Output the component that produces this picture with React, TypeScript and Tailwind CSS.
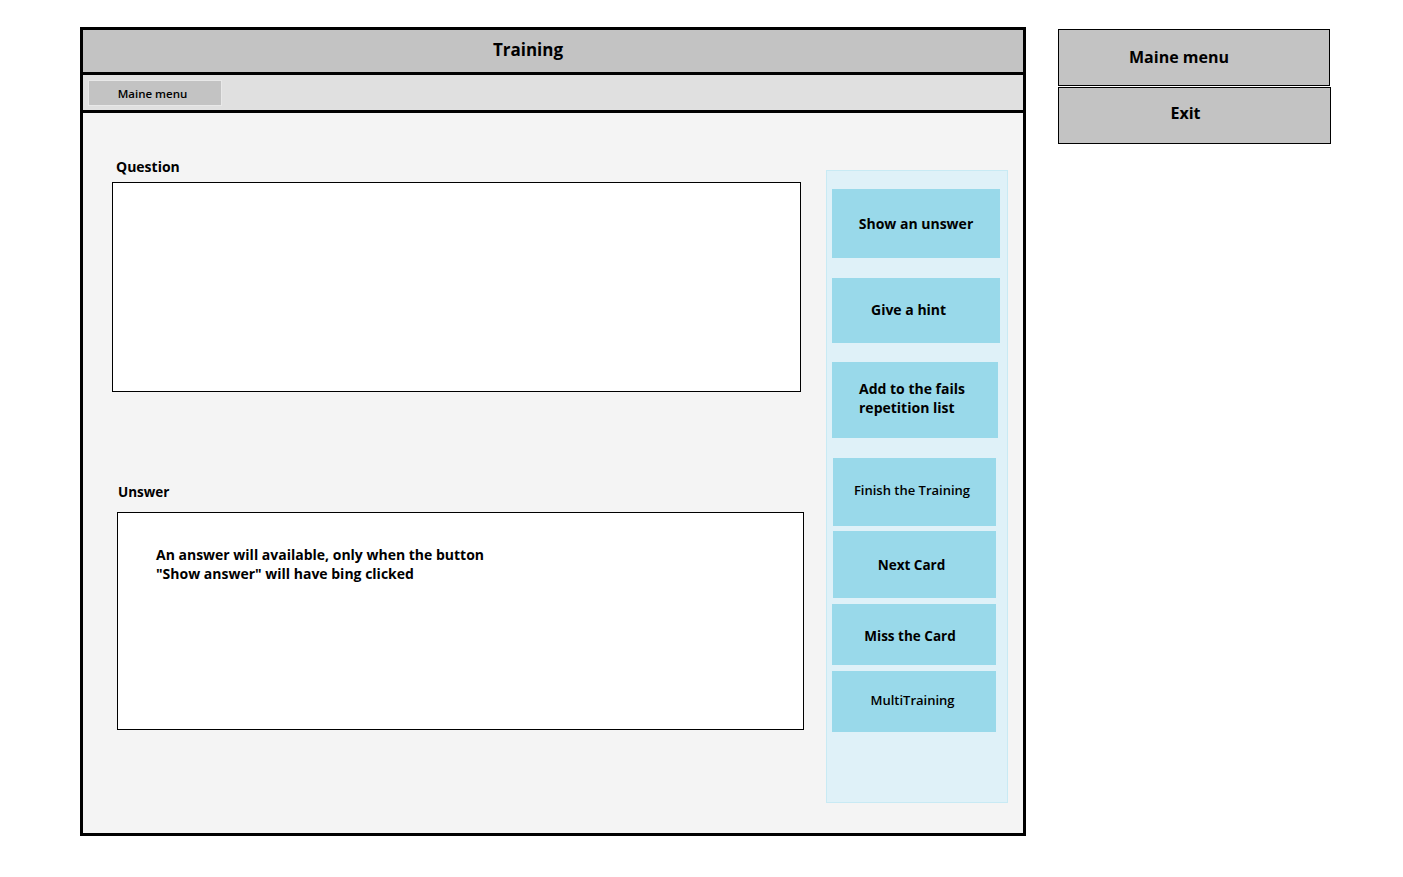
import React from "react";

const font = { fontFamily: "'Open Sans', Lato, sans-serif" };

function SideBtn({ mt, w, h, children, cls = "" }: { mt: string; w: string; h: string; children: React.ReactNode; cls?: string }) {
  return (
    <div className={`${mt} ${w} ${h} ml-[5px] bg-[#99d9ea] flex items-center text-black font-bold ${cls}`}>
      {children}
    </div>
  );
}

export default function App() {
  return (
    <div className="w-[1403px] h-[877px] bg-white flex items-start pt-[27px] pl-[80px]" style={font}>
      <div className="w-[946px] h-[809px] border-[3px] border-black flex flex-col bg-[#f4f4f4]">
        <div className="h-[45px] border-b-[3px] border-black bg-[#c3c3c3] flex items-center justify-center text-[17px] font-bold text-black pb-[3px] pr-[50px]">
          Training
        </div>
        <div className="h-[38px] border-b-[3px] border-black bg-[#e0e0e0] flex items-center pl-[5px]">
          <div className="w-[134px] h-[26px] bg-[#c3c3c3] border border-[#e8e8e8] flex items-center justify-center text-[11.5px] font-semibold text-black mt-[1px] pr-[5px] pt-[2px]">
            Maine menu
          </div>
        </div>
        <div className="flex-1 flex">
          <div className="w-[743px] flex flex-col">
            <div className="mt-[45px] ml-[33px] text-[14px] font-bold text-black leading-[17px]">Question</div>
            <div className="mt-[7px] ml-[29px] w-[689px] h-[210px] bg-white border border-black" />
            <div className="mt-[92px] ml-[35px] text-[13.5px] font-bold text-black leading-[17px]">Unswer</div>
            <div className="mt-[11px] ml-[34px] w-[687px] h-[218px] bg-white border border-black pl-[38px] pt-[32px] text-[14px] font-bold text-black leading-[19px]">
              An answer will available, only when the button
              <br />
              "Show answer" will have bing clicked
            </div>
          </div>
          <div className="mt-[57px] w-[182px] h-[633px] bg-[#dff1f8] border border-[#c8eaf4] flex flex-col">
            <SideBtn mt="mt-[18px]" w="w-[168px]" h="h-[69px]" cls="justify-center text-[14px]">Show an unswer</SideBtn>
            <SideBtn mt="mt-[20px]" w="w-[168px]" h="h-[65px]" cls="pl-[39px] text-[14px] pb-[3px]">Give a hint</SideBtn>
            <SideBtn mt="mt-[19px]" w="w-[166px]" h="h-[76px]" cls="pl-[27px] text-[14px] leading-[19px] pb-[4px]">
              <span>Add to the fails<br />repetition list</span>
            </SideBtn>
            <SideBtn mt="mt-[20px]" w="w-[163px]" h="h-[68px]" cls="ml-[6px] justify-center text-[13px] font-semibold pr-[5px] pb-[3px]">Finish the Training</SideBtn>
            <SideBtn mt="mt-[5px]" w="w-[163px]" h="h-[67px]" cls="ml-[6px] justify-center text-[13.5px] pr-[6px] pt-[1px]">Next Card</SideBtn>
            <SideBtn mt="mt-[6px]" w="w-[164px]" h="h-[61px]" cls="justify-center text-[13.5px] pr-[8px] pt-[3px]">Miss the Card</SideBtn>
            <SideBtn mt="mt-[6px]" w="w-[164px]" h="h-[61px]" cls="justify-center text-[13px] font-semibold pr-[3px] pb-[1px]">MultiTraining</SideBtn>
          </div>
        </div>
      </div>
      <div className="ml-[32px] mt-[2px] flex flex-col">
        <div className="w-[272px] h-[57px] bg-[#c3c3c3] border border-black flex items-center justify-center text-[16px] font-bold text-black pr-[30px] pb-[2px]">
          Maine menu
        </div>
        <div className="mt-[1px] w-[273px] h-[57px] bg-[#c3c3c3] border border-black flex items-center justify-center text-[16px] font-bold text-black pr-[18px] pb-[5px]">
          Exit
        </div>
      </div>
    </div>
  );
}
